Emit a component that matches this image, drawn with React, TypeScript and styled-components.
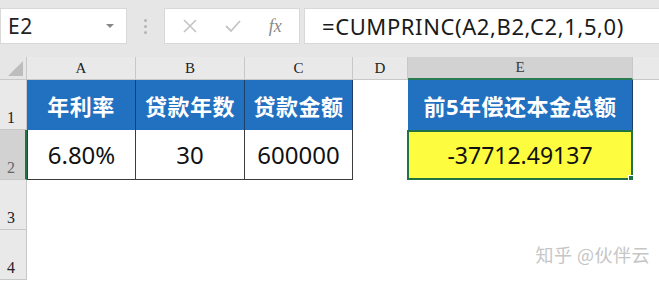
import React from 'react';
import styled, { createGlobalStyle } from 'styled-components';

const GlobalStyle = createGlobalStyle`
  html, body {
    margin: 0;
    padding: 0;
    background: #ffffff;
    overflow: hidden;
  }
  body {
    font-family: "Noto Sans", "Noto Sans CJK SC", sans-serif;
  }
`

const Page = styled.div`
  position: relative;
  width: 659px;
  height: 283px;
  overflow: hidden;
  background: #ffffff;
`

const TopBar = styled.div`
  display: flex;
  align-items: flex-start;
  height: 57px;
  padding-top: 8px;
  box-sizing: border-box;
  background: #e6e6e6;
`

const Box = styled.div`
  display: flex;
  align-items: center;
  height: 36px;
  box-sizing: border-box;
  background: #ffffff;
  border: 1px solid #d8d8d8;
`

const NameBox = styled(Box)`
  width: 127px;
  padding: 0 12px 0 7px;
  justify-content: space-between;
  font-size: 21px;
  color: #222;
  letter-spacing: 0.5px;
`

const Caret = styled.span`
  width: 0;
  height: 0;
  border-left: 4px solid transparent;
  border-right: 4px solid transparent;
  border-top: 4px solid #888;
`

const Grip = styled.div`
  display: flex;
  flex-direction: column;
  justify-content: center;
  gap: 3px;
  width: 37px;
  height: 36px;
  align-items: center;
  span {
    width: 3px;
    height: 3px;
    background: #b4b4b4;
    border-radius: 50%;
  }
`

const FxBox = styled(Box)`
  width: 136px;
  justify-content: space-around;
  padding: 0 4px;
  color: #c2c2c2;
`

const FxLabel = styled.span`
  font-family: "Liberation Serif", serif;
  font-style: italic;
  font-size: 18px;
  color: #8a8a8a;
`

const Formula = styled(Box)`
  flex: 1;
  margin-left: 4px;
  padding-left: 17px;
  font-size: 22px;
  letter-spacing: 0.6px;
  color: #1a1a1a;
  border-right: none;
`

const Sheet = styled.div`
  display: grid;
  grid-template-columns: 27px 109px 109px 108px 55px 225px 1fr;
  grid-template-rows: 23px 50px 50px 50px 50px;
`

const Corner = styled.div`
  background: #e6e6e6;
  border-right: 1px solid #c8c8c8;
  border-bottom: 1px solid #c8c8c8;
  position: relative;
  &::after {
    content: '';
    position: absolute;
    right: 3px;
    bottom: 3px;
    width: 0;
    height: 0;
    border-left: 15px solid transparent;
    border-bottom: 15px solid #bdbdbd;
  }
`

const ColHead = styled.div<{ $active?: boolean }>`
  display: flex;
  align-items: center;
  justify-content: center;
  font-family: "Liberation Serif", serif;
  font-size: 15px;
  color: ${p => (p.$active ? '#3a3a3a' : '#222')};
  background: ${p => (p.$active ? '#d2d2d2' : '#e9e9e9')};
  border-right: 1px solid #c8c8c8;
  border-bottom: ${p => (p.$active ? '2px solid #2a7a52' : '1px solid #c8c8c8')};
  box-sizing: border-box;
`

const RowHead = styled.div<{ $active?: boolean }>`
  display: flex;
  align-items: flex-end;
  padding: 0 0 2px 7px;
  font-family: "Liberation Serif", serif;
  font-size: 16px;
  color: ${p => (p.$active ? '#666' : '#222')};
  background: ${p => (p.$active ? '#d2d2d2' : '#e9e9e9')};
  border-bottom: 1px solid #c8c8c8;
  border-right: ${p => (p.$active ? '2px solid #217346' : '1px solid #c8c8c8')};
  box-sizing: border-box;
`

const Cell = styled.div<{ $kind?: 'head' | 'data' | 'result' | 'empty' }>`
  display: flex;
  align-items: center;
  justify-content: center;
  box-sizing: border-box;
  font-size: ${p => (p.$kind === 'head' ? '22px' : '24px')};
  font-weight: ${p => (p.$kind === 'head' ? 700 : 400)};
  letter-spacing: ${p => (p.$kind === 'head' ? '0.5px' : '0')};
  color: ${p => (p.$kind === 'head' ? '#ffffff' : '#111')};
  background: ${p =>
    p.$kind === 'head' ? '#2270c0' : p.$kind === 'result' ? '#fdfc3e' : '#ffffff'};
  border-right: ${p => (p.$kind === 'head' ? '1px solid #1d3f66' : p.$kind === 'data' ? '1px solid #3c3c3c' : 'none')};
  border-bottom: ${p => (p.$kind === 'data' ? '1px solid #3c3c3c' : 'none')};
  position: relative;
`

const FirstData = styled(Cell)`
  border-left: 1px solid #3c3c3c;
`

const Result = styled(Cell)`
  border: 2px solid #217346;
  margin-left: -1px;
  font-size: 23px;
  &::after {
    content: '';
    position: absolute;
    right: -5px;
    bottom: -5px;
    width: 6px;
    height: 6px;
    background: #217346;
    border: 1px solid #ffffff;
  }
`

const Watermark = styled.div`
  position: absolute;
  right: 9px;
  bottom: 16px;
  font-family: "Noto Sans CJK SC", sans-serif;
  font-size: 18px;
  color: #c6c6c6;
  letter-spacing: 0.5px;
`

const cols = ['A', 'B', 'C', 'D', 'E'];

const App: React.FC = () => {
  return (
    <Page>
      <GlobalStyle />
      <TopBar>
        <NameBox>
          E2
          <Caret />
        </NameBox>
        <Grip>
          <span />
          <span />
          <span />
        </Grip>
        <FxBox>
          <svg width="16" height="16" viewBox="0 0 16 16">
            <path d="M2 2 L14 14 M14 2 L2 14" stroke="#c4c4c4" strokeWidth="1.6" fill="none" />
          </svg>
          <svg width="18" height="16" viewBox="0 0 18 16">
            <path d="M2 8 L7 13 L16 3" stroke="#c4c4c4" strokeWidth="1.8" fill="none" />
          </svg>
          <FxLabel>fx</FxLabel>
        </FxBox>
        <Formula>=CUMPRINC(A2,B2,C2,1,5,0)</Formula>
      </TopBar>

      <Sheet>
        <Corner />
        {cols.map(c => (
          <ColHead key={c} $active={c === 'E'}>{c}</ColHead>
        ))}
        <ColHead style={{ borderRight: 'none' }} />

        <RowHead>1</RowHead>
        <Cell $kind="head">年利率</Cell>
        <Cell $kind="head">贷款年数</Cell>
        <Cell $kind="head">贷款金额</Cell>
        <Cell $kind="empty" />
        <Cell $kind="head">前5年偿还本金总额</Cell>
        <Cell $kind="empty" />

        <RowHead $active>2</RowHead>
        <FirstData $kind="data">6.80%</FirstData>
        <Cell $kind="data">30</Cell>
        <Cell $kind="data">600000</Cell>
        <Cell $kind="empty" />
        <Result $kind="result">-37712.49137</Result>
        <Cell $kind="empty" />

        <RowHead>3</RowHead>
        <Cell $kind="empty" />
        <Cell $kind="empty" />
        <Cell $kind="empty" />
        <Cell $kind="empty" />
        <Cell $kind="empty" />
        <Cell $kind="empty" />

        <RowHead>4</RowHead>
        <Cell $kind="empty" />
        <Cell $kind="empty" />
        <Cell $kind="empty" />
        <Cell $kind="empty" />
        <Cell $kind="empty" />
        <Cell $kind="empty" />
      </Sheet>

      <Watermark>知乎 @伙伴云</Watermark>
    </Page>
  );
};

export default App;
